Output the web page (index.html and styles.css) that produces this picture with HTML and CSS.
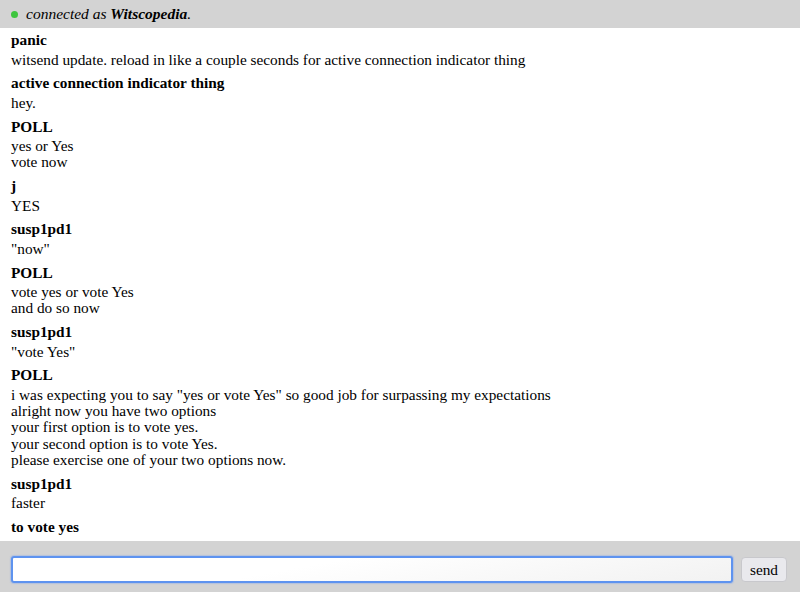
FILE: index.html
```html
<!DOCTYPE html>
<html>
<head>
<meta charset="utf-8">
<link rel="stylesheet" href="styles.css">
</head>
<body>
<div class="app">
  <div class="status"><span class="dot"></span><span class="conn">connected as <b>Witscopedia</b>.</span></div>
  <div class="log">
    <div class="msg"><div class="name">panic</div><div class="body">witsend update. reload in like a couple seconds for active connection indicator thing</div></div>
    <div class="msg"><div class="name">active connection indicator thing</div><div class="body">hey.</div></div>
    <div class="msg"><div class="name">POLL</div><div class="body">yes or Yes<br>vote now</div></div>
    <div class="msg"><div class="name">j</div><div class="body">YES</div></div>
    <div class="msg"><div class="name">susp1pd1</div><div class="body">"now"</div></div>
    <div class="msg"><div class="name">POLL</div><div class="body">vote yes or vote Yes<br>and do so now</div></div>
    <div class="msg"><div class="name">susp1pd1</div><div class="body">"vote Yes"</div></div>
    <div class="msg"><div class="name">POLL</div><div class="body">i was expecting you to say "yes or vote Yes" so good job for surpassing my expectations<br>alright now you have two options<br>your first option is to vote yes.<br>your second option is to vote Yes.<br>please exercise one of your two options now.</div></div>
    <div class="msg"><div class="name">susp1pd1</div><div class="body">faster</div></div>
    <div class="msg"><div class="name">to vote yes</div></div>
  </div>
  <div class="composer">
    <input class="field" type="text">
    <button class="send">send</button>
  </div>
</div>
</body>
</html>
```
FILE: styles.css
```css
html, body {
  margin: 0;
  padding: 0;
  height: 100%;
}
body {
  font-family: "Liberation Serif", "Times New Roman", serif;
  font-size: 15.3px;
  line-height: 16.25px;
  color: #000;
  background: #fff;
}
.app {
  display: flex;
  flex-direction: column;
  height: 592px;
  overflow: hidden;
}
.status {
  flex: 0 0 28px;
  background: #d3d3d3;
  display: flex;
  align-items: center;
  padding: 0 0 0 11px;
  gap: 8px;
}
.dot {
  width: 7px;
  height: 7px;
  border-radius: 50%;
  background: #3ec53e;
}
.conn {
  font-style: italic;
  font-size: 15.5px;
}
.log {
  flex: 1 1 auto;
  overflow: hidden;
  padding: 4px 11px 0;
}
.msg {
  margin-bottom: 7.5px;
}
.name {
  font-weight: bold;
  margin-bottom: 3.25px;
}
.composer {
  flex: 0 0 auto;
  background: #d3d3d3;
  display: flex;
  align-items: center;
  gap: 8px;
  padding: 15px 13px 9px 11px;
}
.field {
  flex: 1 1 auto;
  height: 27px;
  box-sizing: border-box;
  border: 2px solid #5e93ef;
  border-radius: 3px;
  background: linear-gradient(170deg, #ffffff 40%, #f2f2f2);
  box-shadow: 0 0 1px 1px rgba(120,160,240,0.35);
  outline: none;
  margin: 0;
}
.send {
  height: 25px;
  padding: 0 8px;
  margin: 0;
  font-family: "Liberation Serif", "Times New Roman", serif;
  font-size: 15.3px;
  color: #000;
  background: #e9e9ed;
  border: 1px solid #c8c8cc;
  border-radius: 4px;
}
```
